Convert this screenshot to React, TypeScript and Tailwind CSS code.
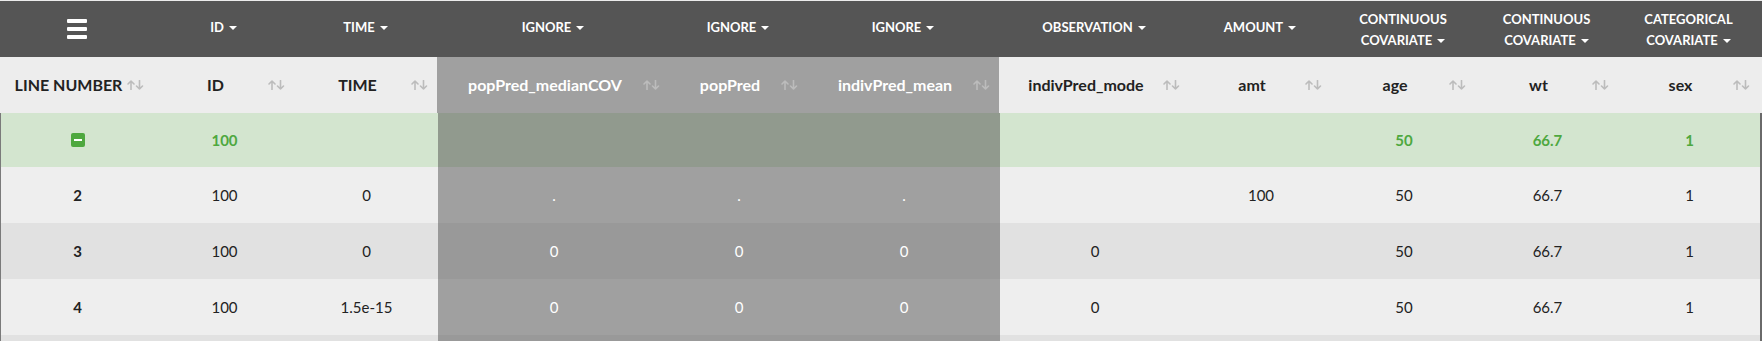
const cols = [
  { type: '', name: 'LINE NUMBER' },
  { type: 'ID', name: 'ID' },
  { type: 'TIME', name: 'TIME' },
  { type: 'IGNORE', name: 'popPred_medianCOV', ignored: true },
  { type: 'IGNORE', name: 'popPred', ignored: true },
  { type: 'IGNORE', name: 'indivPred_mean', ignored: true },
  { type: 'OBSERVATION', name: 'indivPred_mode' },
  { type: 'AMOUNT', name: 'amt' },
  { type: 'CONTINUOUS|COVARIATE', name: 'age' },
  { type: 'CONTINUOUS|COVARIATE', name: 'wt' },
  { type: 'CATEGORICAL|COVARIATE', name: 'sex' },
]

const rows = [
  ['2', '100', '0', '.', '.', '.', '', '100', '50', '66.7', '1'],
  ['3', '100', '0', '0', '0', '0', '0', '', '50', '66.7', '1'],
  ['4', '100', '1.5e-15', '0', '0', '0', '0', '', '50', '66.7', '1'],
  ['', '', '', '', '', '', '', '', '', '', ''],
]

const grid = 'grid grid-cols-[153px_141px_143px_232px_138px_192px_190px_142px_144px_143px_141px]'

function Caret() {
  return <span className="inline-block w-0 h-0 ml-[5px] mb-[2px] align-middle border-x-[4px] border-x-transparent border-t-[4px] border-t-white" />
}

function SortIcon() {
  return (
    <svg width="17" height="10" viewBox="0 0 17 10" className="shrink-0">
      <g stroke="#bcbcbc" strokeWidth="1.6" fill="none" strokeLinecap="round" strokeLinejoin="round">
        <path d="M4 9.5V1M1 4l3-3 3 3" />
        <path d="M12.5 0.5V9M9.5 6l3 3 3-3" />
      </g>
    </svg>
  )
}

function MinusBox() {
  return (
    <span className="inline-flex items-center justify-center w-[14px] h-[14px] rounded-[2px] bg-[#4ea83f]">
      <span className="block w-[8px] h-[2px] bg-white" />
    </span>
  )
}

function TypeHeader({ type }: { type: string }) {
  if (!type) return (
    <div className="flex flex-col gap-[4px]">
      <span className="block w-[20px] h-[4px] rounded-[1px] bg-white" />
      <span className="block w-[20px] h-[4px] rounded-[1px] bg-white" />
      <span className="block w-[20px] h-[4px] rounded-[1px] bg-white" />
    </div>
  )
  const parts = type.split('|')
  if (parts.length === 2) return (
    <div className="text-center leading-[21px] mt-[2px]">
      <div>{parts[0]}</div>
      <div>{parts[1]}<Caret /></div>
    </div>
  )
  return <div className="mb-[2px]">{type}<Caret /></div>
}

export default function App() {
  return (
    <div className="w-[1762px] h-[341px] overflow-hidden bg-white font-['Lato',sans-serif] text-[#222]">
      <div className="h-[1px] bg-[#ececec]" />

      <div className={`${grid} h-[56px] bg-[#555555] text-white text-[13px] font-bold`}>
        {cols.map((c, i) => (
          <div key={i} className="flex items-center justify-center">
            <TypeHeader type={c.type} />
          </div>
        ))}
      </div>

      <div className={`${grid} h-[56px] bg-[#ededed] text-[16px] font-bold`}>
        {cols.map((c, i) => (
          <div key={i} className={`flex items-center pl-[10px] pr-[9px] ${c.ignored ? 'bg-[#a0a0a0] text-white' : ''}`}>
            <span className="flex-1 text-center whitespace-nowrap">{c.name}</span>
            <SortIcon />
          </div>
        ))}
      </div>

      <div className="border-r-[2px] border-r-[#6a6a6a] border-l border-l-[#7a7a7a]">
        <div className={`${grid} h-[54px] bg-[#d3e5cf] text-[15px] font-bold text-[#4ea83f]`}>
          {cols.map((c, i) => (
            <div key={i} className={`flex items-center justify-center ${c.ignored ? 'bg-[#919a8e]' : ''}`}>
              {i === 0 && <MinusBox />}
              {i === 1 && '100'}
              {i === 8 && '50'}
              {i === 9 && '66.7'}
              {i === 10 && '1'}
            </div>
          ))}
        </div>

        {rows.map((r, ri) => (
          <div key={ri} className={`${grid} h-[56px] text-[15px] ${ri % 2 === 0 ? 'bg-[#eeeeee]' : 'bg-[#e1e1e1]'}`}>
            {r.map((v, i) => (
              <div
                key={i}
                className={`flex items-center justify-center ${i === 0 ? 'font-bold' : ''} ${cols[i].ignored ? (ri % 2 === 0 ? 'bg-[#a0a0a0] text-white' : 'bg-[#999999] text-white') : ''}`}
              >
                {v}
              </div>
            ))}
          </div>
        ))}
      </div>
    </div>
  )
}
